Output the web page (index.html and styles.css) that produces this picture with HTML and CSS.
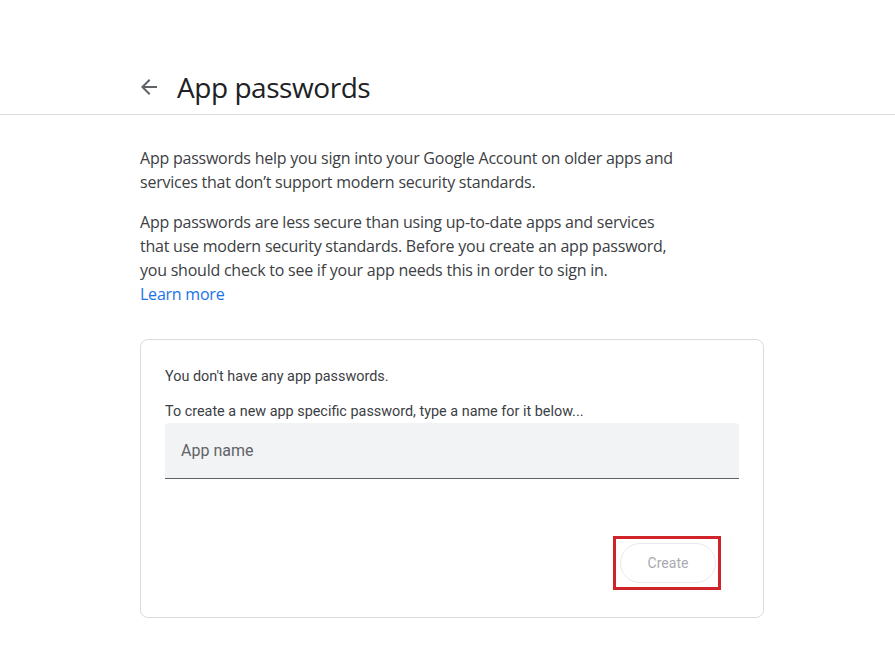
FILE: index.html
```html
<!DOCTYPE html>
<html lang="en">
<head>
<meta charset="utf-8">
<title>App passwords</title>
<link rel="stylesheet" href="styles.css">
</head>
<body>
<header class="top">
  <div class="top-row">
    <button class="back" aria-label="Back">
      <svg viewBox="0 0 24 24" width="24" height="24"><path d="M20 11H7.83l5.59-5.59L12 4l-8 8 8 8 1.41-1.41L7.83 13H20v-2z" fill="#5f6368"/></svg>
    </button>
    <h1 class="title">App passwords</h1>
  </div>
</header>
<main class="main">
  <p class="para">App passwords help you sign into your Google Account on older apps and<br>services that don’t support modern security standards.</p>
  <p class="para">App passwords are less secure than using up-to-date apps and services<br>that use modern security standards. Before you create an app password,<br>you should check to see if your app needs this in order to sign in.<br><a class="link" href="#">Learn more</a></p>
  <section class="card">
    <p class="card-text">You don't have any app passwords.</p>
    <p class="card-text second">To create a new app specific password, type a name for it below...</p>
    <div class="field"><span class="placeholder">App name</span></div>
    <div class="actions">
      <span class="highlight"><button class="create">Create</button></span>
    </div>
  </section>
</main>
</body>
</html>
```
FILE: styles.css
```css
* { box-sizing: border-box; }
body {
  margin: 0;
  background: #fff;
  font-family: "Open Sans", "Noto Sans", sans-serif;
  color: #202124;
}
.top {
  padding: 63px 0 3px;
  border-bottom: 1px solid #dadce0;
}
.top-row {
  height: 48px;
  display: flex;
  align-items: center;
  padding-left: 137px;
  gap: 16px;
}
.back {
  width: 24px;
  height: 24px;
  padding: 0;
  border: 0;
  background: none;
  display: flex;
}
.title {
  margin: 0;
  font-size: 28px;
  font-weight: 400;
  letter-spacing: -0.45px;
  color: #202124;
}
.main {
  padding: 31px 0 0 140px;
  width: 764px;
}
.para {
  margin: 0 0 16px;
  font-size: 16px;
  line-height: 24px;
  color: #3c4043;
  letter-spacing: -0.23px;
  white-space: nowrap;
}
.link {
  color: #1a73e8;
  text-decoration: none;
}
.card {
  margin-top: 33px;
  border: 1px solid #dadce0;
  border-radius: 8px;
  padding: 27px 24px 27px;
  font-family: Roboto, "Liberation Sans", sans-serif;
}
.card-text {
  margin: 0;
  font-size: 14.4px;
  line-height: 20px;
  color: #3c4043;
}
.card-text.second {
  margin-top: 15px;
}
.field {
  margin-top: 1px;
  height: 56px;
  background: #f1f3f4;
  border-bottom: 1px solid #5f6368;
  border-radius: 4px 4px 0 0;
  display: flex;
  align-items: center;
  padding-left: 16px;
}
.placeholder {
  font-size: 16px;
  color: #5f6368;
}
.actions {
  margin-top: 57px;
  display: flex;
  justify-content: flex-end;
  padding-right: 18px;
}
.highlight {
  display: flex;
  border: 3px solid #d0242b;
  padding: 4px 2px 4px 4px;
}
.create {
  width: 96px;
  height: 40px;
  border: 1px solid #e8eaed;
  border-radius: 20px;
  background: #fff;
  font-family: Roboto, "Liberation Sans", sans-serif;
  font-size: 14px;
  color: #a8abaf;
}
```
